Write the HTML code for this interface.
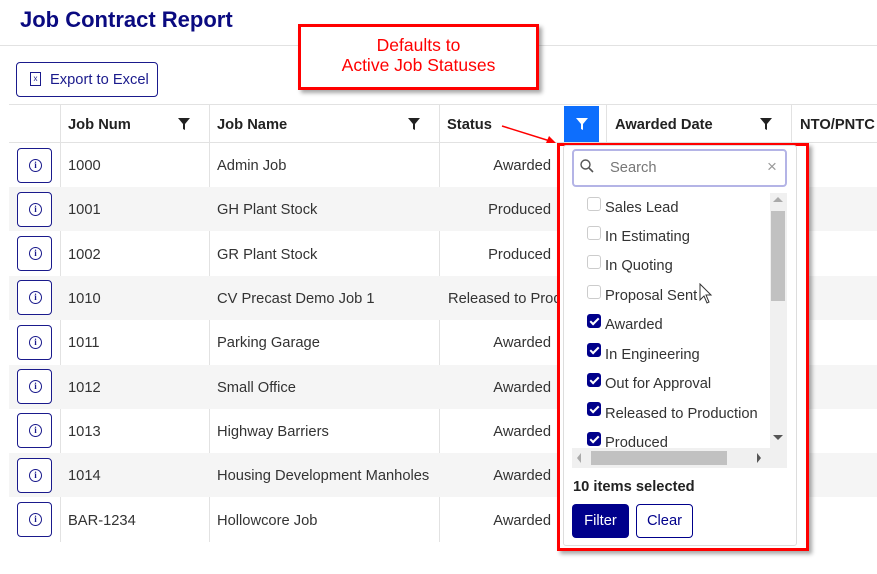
<!DOCTYPE html>
<html><head><meta charset="utf-8"><style>
*{box-sizing:border-box;margin:0;padding:0}
body{width:877px;height:574px;background:#fff;font-family:"Liberation Sans",Arial,sans-serif;position:relative;overflow:hidden;color:#333}
.a{position:absolute}
.t{font-size:14.7px;white-space:nowrap;margin-top:1px}
.r{position:absolute;right:326px;font-size:14.7px;white-space:nowrap;margin-top:1px}
.hd{font-size:14.7px;font-weight:bold;color:#222;margin-top:1px}
.vl{position:absolute;width:1px;background:#e2e2e2}
.ib{position:absolute;left:17px;width:35px;height:35px;border:1px solid #1a1a8c;border-radius:4px;background:#fff}
.ib:after{content:"i";position:absolute;left:11px;top:10px;width:11px;height:11px;border:1px solid #1a1a8c;border-radius:50%;font:bold 9px "Liberation Serif",serif;color:#1a1a8c;text-align:center;line-height:10px}
.cb{position:absolute;left:587px;width:14px;height:14px;border:1px solid #ccc;border-radius:3px;background:#fff}
.cb.on{background:#00008b;border-color:#00008b}
.cb.on:after{content:"";position:absolute;left:4px;top:1px;width:3px;height:7px;border:solid #fff;border-width:0 2px 2px 0;transform:rotate(45deg)}
.li{position:absolute;left:605px;font-size:14.7px;color:#333;white-space:nowrap;margin-top:1px}
</style></head><body>
<div class="a" style="left:20px;top:7px;font-size:22px;font-weight:bold;color:#0a0a80">Job Contract Report</div>
<div class="a" style="left:0;top:45px;width:877px;height:1px;background:#e2e2e2"></div>
<div class="a" style="left:16px;top:62px;width:142px;height:35px;border:1px solid #1a1a8c;border-radius:4px"></div>
<div class="a" style="left:30px;top:72px;width:11px;height:14px;border:1px solid #1a1a8c;font-size:8px;color:#1a1a8c;text-align:center;line-height:12px">x</div>
<div class="a t" style="left:50px;top:71px;color:#1a1a8c">Export to Excel</div>

<div class="a" style="left:9px;top:104px;width:868px;height:1px;background:#e2e2e2"></div>
<div class="a" style="left:9px;top:142px;width:868px;height:1px;background:#e2e2e2"></div>
<div class="vl" style="left:60px;top:104px;height:438px"></div>
<div class="vl" style="left:209px;top:104px;height:438px"></div>
<div class="vl" style="left:439px;top:104px;height:438px"></div>
<div class="vl" style="left:606px;top:104px;height:38px"></div>
<div class="vl" style="left:791px;top:104px;height:38px"></div>
<div class="a hd" style="left:68px;top:116px">Job Num</div>
<div class="a hd" style="left:217px;top:116px">Job Name</div>
<div class="a hd" style="left:447px;top:116px">Status</div>
<div class="a hd" style="left:615px;top:116px">Awarded Date</div>
<div class="a hd" style="left:800px;top:116px">NTO/PNTC</div>
<svg class="a" style="left:178px;top:118px" width="12" height="12"><path d="M0 0H12L7 6V12L5 11V6Z" fill="#222"/></svg>
<svg class="a" style="left:408px;top:118px" width="12" height="12"><path d="M0 0H12L7 6V12L5 11V6Z" fill="#222"/></svg>
<svg class="a" style="left:760px;top:118px" width="12" height="12"><path d="M0 0H12L7 6V12L5 11V6Z" fill="#222"/></svg>
<div class="a" style="left:564px;top:106px;width:35px;height:36px;background:#0d6efd"></div>
<svg class="a" style="left:576px;top:118px" width="12" height="12"><path d="M0 0H12L7 6V12L5 11V6Z" fill="#fff"/></svg>

<div class="a" style="left:9px;top:187px;width:868px;height:44px;background:#f5f5f5"></div>
<div class="a" style="left:9px;top:276px;width:868px;height:44px;background:#f5f5f5"></div>
<div class="a" style="left:9px;top:365px;width:868px;height:44px;background:#f5f5f5"></div>
<div class="a" style="left:9px;top:453px;width:868px;height:44px;background:#f5f5f5"></div>

<div class="ib" style="top:148px"></div><div class="a t" style="left:68px;top:157px">1000</div><div class="a t" style="left:217px;top:157px">Admin Job</div><div class="r" style="top:157px">Awarded</div>
<div class="ib" style="top:192px"></div><div class="a t" style="left:68px;top:201px">1001</div><div class="a t" style="left:217px;top:201px">GH Plant Stock</div><div class="r" style="top:201px">Produced</div>
<div class="ib" style="top:236px"></div><div class="a t" style="left:68px;top:246px">1002</div><div class="a t" style="left:217px;top:246px">GR Plant Stock</div><div class="r" style="top:246px">Produced</div>
<div class="ib" style="top:280px"></div><div class="a t" style="left:68px;top:290px">1010</div><div class="a t" style="left:217px;top:290px">CV Precast Demo Job 1</div><div class="a t" style="left:448px;top:290px">Released to Production</div>
<div class="ib" style="top:325px"></div><div class="a t" style="left:68px;top:334px">1011</div><div class="a t" style="left:217px;top:334px">Parking Garage</div><div class="r" style="top:334px">Awarded</div>
<div class="ib" style="top:369px"></div><div class="a t" style="left:68px;top:379px">1012</div><div class="a t" style="left:217px;top:379px">Small Office</div><div class="r" style="top:379px">Awarded</div>
<div class="ib" style="top:413px"></div><div class="a t" style="left:68px;top:423px">1013</div><div class="a t" style="left:217px;top:423px">Highway Barriers</div><div class="r" style="top:423px">Awarded</div>
<div class="ib" style="top:458px"></div><div class="a t" style="left:68px;top:467px">1014</div><div class="a t" style="left:217px;top:467px">Housing Development Manholes</div><div class="r" style="top:467px">Awarded</div>
<div class="ib" style="top:502px"></div><div class="a t" style="left:68px;top:512px">BAR-1234</div><div class="a t" style="left:217px;top:512px">Hollowcore Job</div><div class="r" style="top:512px">Awarded</div>

<!-- popup -->
<div class="a" style="left:557px;top:143px;width:252px;height:408px;border:3px solid #f00;background:#fff;box-shadow:3px 3px 4px rgba(0,0,0,.35)"></div>
<div class="a" style="left:563px;top:145px;width:234px;height:401px;border:1px solid #ddd;border-radius:3px;background:#fff"></div>
<div class="a" style="left:572px;top:149px;width:215px;height:38px;border:2px solid #b4b4e6;border-radius:4px"></div>
<svg class="a" style="left:580px;top:159px" width="14" height="14"><circle cx="5.5" cy="5.5" r="4.5" fill="none" stroke="#555" stroke-width="1.4"/><path d="M9 9L13 13" stroke="#555" stroke-width="1.6"/></svg>
<div class="a t" style="left:610px;top:159px;color:#777">Search</div>
<div class="a" style="left:767px;top:157px;font-size:17px;color:#999">×</div>

<div class="cb" style="top:197px"></div><div class="li" style="top:199px">Sales Lead</div>
<div class="cb" style="top:226px"></div><div class="li" style="top:228px">In Estimating</div>
<div class="cb" style="top:255px"></div><div class="li" style="top:257px">In Quoting</div>
<div class="cb" style="top:285px"></div><div class="li" style="top:287px">Proposal Sent</div>
<div class="cb on" style="top:314px"></div><div class="li" style="top:316px">Awarded</div>
<div class="cb on" style="top:343px"></div><div class="li" style="top:346px">In Engineering</div>
<div class="cb on" style="top:373px"></div><div class="li" style="top:375px">Out for Approval</div>
<div class="cb on" style="top:402px"></div><div class="li" style="top:405px">Released to Production</div>
<div class="cb on" style="top:432px"></div><div class="li" style="top:434px">Produced</div>
<div class="a" style="left:572px;top:448px;width:215px;height:20px;background:#f0f0f0"></div>
<div class="a" style="left:770px;top:193px;width:17px;height:255px;background:#f0f0f0"></div>
<div class="a" style="left:771px;top:211px;width:14px;height:90px;background:#c1c1c1"></div>
<div class="a" style="left:591px;top:451px;width:136px;height:14px;background:#c1c1c1"></div>
<div class="a" style="left:773px;top:197px;border:5px solid transparent;border-bottom:5px solid #aaa;border-top:0"></div>
<div class="a" style="left:773px;top:435px;border:5px solid transparent;border-top:5px solid #555;border-bottom:0"></div>
<div class="a" style="left:577px;top:453px;border:5px solid transparent;border-right:4px solid #aaa;border-left:0"></div>
<div class="a" style="left:757px;top:453px;border:5px solid transparent;border-left:4px solid #555;border-right:0"></div>
<div class="a t" style="left:573px;top:478px;font-weight:bold;color:#222">10 items selected</div>
<div class="a t" style="left:572px;top:503px;width:57px;height:34px;background:#00008b;border-radius:4px;color:#fff;text-align:center;line-height:34px">Filter</div>
<div class="a t" style="left:636px;top:503px;width:57px;height:34px;border:1px solid #00008b;border-radius:4px;color:#00008b;text-align:center;line-height:32px">Clear</div>
<svg class="a" style="left:698px;top:283px" width="16" height="22"><path d="M2 1V17L6 13L9 20L11 19L8 12H13Z" fill="#fff" stroke="#333" stroke-width="1"/></svg>

<!-- callout -->
<div class="a" style="left:298px;top:24px;width:241px;height:66px;border:3px solid #f00;background:#fff;box-shadow:3px 3px 4px rgba(0,0,0,.35);color:#f00;text-align:center;font-size:17.5px;line-height:20px;padding-top:8px">Defaults to<br>Active Job Statuses</div>
<svg class="a" style="left:0;top:0" width="877" height="574"><path d="M502 126L550 141" stroke="#f00" stroke-width="1.5"/><path d="M556 143L546 143L549 136Z" fill="#f00"/></svg>
</body></html>
